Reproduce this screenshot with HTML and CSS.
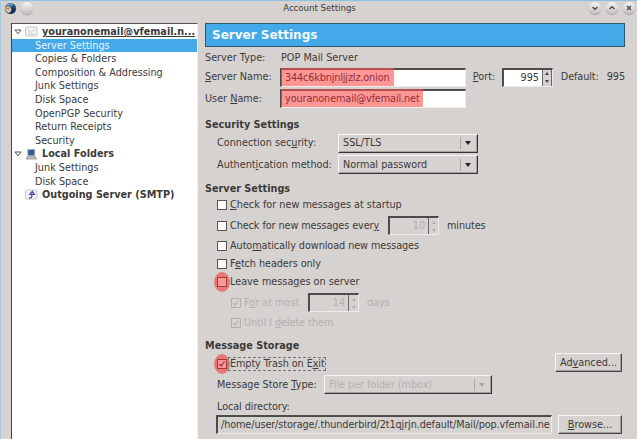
FILE: index.html
```html
<!DOCTYPE html>
<html lang="en">
<head>
<meta charset="utf-8">
<title>Account Settings</title>
<link rel="stylesheet" href="styles.css">
</head>
<body>
<div class="window">
  <header class="titlebar">
    <div class="tb-left">
      <svg width="13" height="13" viewBox="0 0 13 13"><circle cx="6.5" cy="6.5" r="5.6" fill="#24477a"/><path d="M2 3Q6 -.5 10 3L8 4Q5 2 2.500 5Z" fill="#6c9bd0"/><path d="M1 5L6 4L8 8L5 11Q1 10 1 5Z" fill="#d9c9a5"/><path d="M1.500 5.500L4.500 7.500L6 4.500" fill="none" stroke="#8b7650"/><path d="M7 6Q11 6 11.500 9Q9 12.500 5 11.500Q9 10 7 6Z" fill="#172a50"/></svg>
      <span class="orb"></span>
    </div>
    <span class="tb-title">Account Settings</span>
    <div class="tb-right">
      <span class="orb"><svg viewBox="0 0 12 12"><path d="M3.500 5L6 7.300L8.500 5"/></svg></span>
      <span class="orb"><svg viewBox="0 0 12 12"><path d="M3.500 7L6 4.700L8.500 7"/></svg></span>
      <span class="orb"><svg viewBox="0 0 12 12"><path d="M4 4L8 8M8 4L4 8"/></svg></span>
    </div>
  </header>
  <div class="content">
    <nav class="tree">
      <div class="node"><svg class="twisty" viewBox="0 0 8 6"><path d="M1 1H7L4 4.800Z"/></svg><svg class="icon" viewBox="0 0 13 10"><rect x=".5" y=".5" width="11.500" height="9" rx="1" fill="#f2f2f2" stroke="#c6c6c6"/><path d="M3 3L6.300 6L9.500 3M2.500 7.500H10" fill="none" stroke="#ccc"/></svg><b class="account">youranonemail@vfemail.n...</b></div>
      <div class="leaf selected">Server Settings</div>
      <div class="leaf">Copies &amp; Folders</div>
      <div class="leaf">Composition &amp; Addressing</div>
      <div class="leaf">Junk Settings</div>
      <div class="leaf">Disk Space</div>
      <div class="leaf">OpenPGP Security</div>
      <div class="leaf">Return Receipts</div>
      <div class="leaf">Security</div>
      <div class="node"><svg class="twisty" viewBox="0 0 8 6"><path d="M1 1H7L4 4.800Z"/></svg><svg class="icon" viewBox="0 0 13 12"><rect x="2.500" y=".5" width="7.500" height="6.500" fill="#38589c" stroke="#a9a9a9"/><path d="M2 8H10.500L12 11H.8Z" fill="#bbb" stroke="#888" stroke-width=".7"/></svg><b>Local Folders</b></div>
      <div class="leaf">Junk Settings</div>
      <div class="leaf">Disk Space</div>
      <div class="node"><span class="twisty"></span><svg class="icon" viewBox="0 0 13 10"><rect x=".5" y=".5" width="11.500" height="9" rx="1" fill="#f2f2f5" stroke="#ccc"/><path d="M4 8.500H5.500Q7 8 7 4.500M4.800 4.800L7.300 1.800L9.300 4.800Z" fill="none" stroke="#5b46b8" stroke-width="1.300"/></svg><b>Outgoing Server (SMTP)</b></div>
    </nav>
    <main class="panel">
      <h1>Server Settings</h1>
      <div class="row type"><span class="field">Server Type:</span><span class="plain">POP Mail Server</span></div>
      <div class="row name"><label class="field"><u>S</u>erver Name:</label><div class="input host"><mark class="mark">344c6kbnjnljjzlz.onion</mark></div><label class="port-label"><u>P</u>ort:</label><div class="input spin port"><span>995</span><i class="steps"><i class="up"></i><i class="down"></i></i></div><span class="default">Default:</span><span class="default-value">995</span></div>
      <div class="row user"><label class="field">User <u>N</u>ame:</label><div class="input host"><mark class="mark wide">youranonemail@vfemail.net</mark></div></div>
      <h2 class="h-security">Security Settings</h2>
      <div class="row in conn"><label class="sel-label">Connection sec<u>u</u>rity:</label><div class="select"><span>SSL/TLS</span><i class="arrow"></i></div></div>
      <div class="row in auth"><label class="sel-label">Authent<u>i</u>cation method:</label><div class="select"><span>Normal password</span><i class="arrow"></i></div></div>
      <h2 class="h-server">Server Settings</h2>
      <div class="row in startup"><i class="box"></i><span><u>C</u>heck for new messages at startup</span></div>
      <div class="row in every"><i class="box"></i><span class="every-text">Check for new messages ever<u>y</u></span><div class="input spin off"><span>10</span><i class="steps"><i class="up"></i><i class="down"></i></i></div><span class="unit">minutes</span></div>
      <div class="row in third"><i class="box"></i><span>Auto<u>m</u>atically download new messages</span></div>
      <div class="row in third"><i class="box"></i><span>F<u>e</u>tch headers only</span></div>
      <div class="row in leave"><i class="box ringed"></i><span class="leave-text">Leave messa<u>g</u>es on server</span></div>
      <div class="row sub every"><i class="box"><svg viewBox="0 0 8 8"><path d="M1.500 4L3.200 6L6.500 1.500"/></svg></i><span class="most-text">F<u>o</u>r at most</span><div class="input spin off"><span>14</span><i class="steps"><i class="up"></i><i class="down"></i></i></div><span class="unit">days</span></div>
      <div class="row sub third"><i class="box"><svg viewBox="0 0 8 8"><path d="M1.500 4L3.200 6L6.500 1.500"/></svg></i><span>Until I <u>d</u>elete them</span></div>
      <h2 class="h-storage">Message Storage</h2>
      <div class="row in trash"><i class="box ringed"><svg viewBox="0 0 8 8"><path d="M1.500 4L3.200 6L6.500 1.500"/></svg></i><span class="focus">Empty Trash on E<u>x</u>it</span><div class="button">Ad<u>v</u>anced...</div></div>
      <div class="row in store"><label class="store-label">Message Store <u>T</u>ype:</label><div class="select off"><span>File per folder (mbox)</span><i class="arrow"></i></div></div>
      <div class="row in dir">Local directory:</div>
      <div class="row in path"><div class="input dirbox"><span>/home/user/storage/.thunderbird/2t1qjrjn.default/Mail/pop.vfemail.ne</span></div><div class="button browse"><u>B</u>rowse...</div></div>
    </main>
  </div>
</div>
</body>
</html>
```
FILE: styles.css
```css
* { box-sizing: border-box; }
body { margin: 0; background: #d6d2d0; color: #3c3a39; font: 9.7px/14px "DejaVu Sans", sans-serif; }
i { font-style: normal; }
u { text-underline-offset: 1px; text-decoration-thickness: 1px; }
.window { width: 637px; height: 439px; overflow: hidden; border-top: 1px solid #8dbfe0; border-left: 1px solid #a3cbe4; display: flex; flex-direction: column; white-space: nowrap; }
.titlebar { height: 22px; flex: none; display: grid; grid-template-columns: 1fr auto 1fr; align-items: start; padding: 0 2px 0 3px; }
.tb-left, .tb-right { display: flex; align-items: center; height: 14px; }
.tb-left { gap: 4px; }
.tb-right { gap: 5px; justify-content: flex-end; }
.tb-title { font-size: 8.6px; line-height: 14px; }
.orb { width: 12px; height: 12px; border-radius: 50%; background: linear-gradient(#f4f4f4, #c2bfbd); box-shadow: 0 1px 1px #a09e9c; display: block; }
.orb svg { display: block; fill: none; stroke: #4b4b4b; stroke-width: 1.3; }
.content { flex: 1; display: flex; min-height: 0; padding-left: 10px; }
.tree { width: 187px; flex: none; background: #fff; border: 1px solid #555; border-left-color: #444; border-right: 1px solid #f0eeed; border-bottom: 0; padding-top: 1px; }
.node, .leaf { height: 13.6px; line-height: 13.6px; }
.node { display: flex; align-items: center; padding-left: 2px; }
.leaf { padding-left: 23px; }
.selected { background: #43a9e8; color: #e9f6ff; }
.twisty { width: 8px; height: 6px; margin-right: 3px; fill: none; stroke: #555; }
.icon { width: 13px; height: 11px; margin-right: 4px; }
.account { text-decoration: underline; text-underline-offset: 1px; }
.panel { width: 420px; margin-left: 7px; flex: none; }
h1 { margin: 0; height: 24px; font-size: 12px; line-height: 22px; padding-left: 6px; color: #f4fbff; background: #43a9e8; border: 1px solid #30566f; width: 420px; }
h2 { margin: 0; height: 16px; font-size: 9.7px; line-height: 16px; }
.row { display: flex; align-items: center; }
.in { padding-left: 12px; }
.sub { padding-left: 26px; color: #b5b0ad; }
.type { height: 16px; margin-top: 3px; }
.name { height: 20px; margin-top: 1px; }
.user { height: 19px; margin-top: 2px; }
.field { width: 75px; }
.plain { margin-left: 1px; }
.input { height: 19px; background: #fff; border: 1px solid; border-width: 2px 1px 1px 2px; border-color: #4e4c4b #efedec #efedec #4e4c4b; display: flex; align-items: center; letter-spacing: -.1px; }
.host { width: 186px; }
.mark { background: rgba(255, 80, 80, .6); color: #8e3038; align-self: stretch; line-height: 16px; width: 113px; margin: -2px 0 0 -1px; padding: 2px 0 0 4px; letter-spacing: -.14px; }
.mark.wide { width: 142px; letter-spacing: -.1px; }
.port-label { margin-left: 7px; width: 29px; }
.spin { width: 51px; justify-content: flex-end; }
.steps { width: 10px; height: 100%; margin-left: 3px; background: #d6d2d0; border-left: 1px solid #666; display: flex; flex-direction: column; justify-content: space-around; align-items: center; }
.port .steps { border-right: 1px solid #666; }
.up, .down { border: 2px solid transparent; }
.up { border-top: 0; border-bottom: 3px solid #444; }
.down { border-bottom: 0; border-top: 3px solid #444; }
.default { margin-left: 8px; width: 46px; letter-spacing: -.1px; }
.default-value { letter-spacing: -.1px; }
.h-security { margin-top: 9px; }
.conn { height: 20px; }
.auth { height: 19px; margin-top: 2px; }
.sel-label { width: 121px; }
.select { width: 140px; height: 19px; border: 1px solid; border-color: #f7f5f4 #333 #333 #f7f5f4; box-shadow: inset -1px -1px #a5a19f; display: flex; align-items: center; justify-content: space-between; padding: 0 6px 0 4px; }
.arrow { width: 11px; height: 12px; border-left: 1px solid #aaa6a4; display: flex; align-items: center; justify-content: flex-end; }
.arrow::after { content: ""; border: 3.5px solid transparent; border-top: 4px solid #222; border-bottom: 0; }
.h-server { margin-top: 7px; }
.startup { height: 16px; }
.every { height: 19px; margin-top: 3px; }
.every-text { width: 158px; letter-spacing: -.08px; }
.third { height: 15px; margin-top: 3px; letter-spacing: -.07px; }
.leave { height: 16px; margin-top: 3px; }
.box { width: 10px; height: 10px; border: 1px solid #555; background: #fff; margin-right: 3px; flex: none; }
.box svg { display: block; fill: none; stroke: currentColor; stroke-width: 1.2; }
.sub .box { background: none; border-color: #b5b0ad; }
.ringed { background: #ff9999; border-color: #9d3a3a; position: relative; color: #8e3038; }
.ringed::before { content: ""; position: absolute; left: -4px; top: -6px; width: 16px; height: 20px; border-radius: 50%; background: #e87777; z-index: -1; }
.off.input { background: none; color: #b5b0ad; }
.off .up { border-bottom-color: #b5b0ad; }
.off .down { border-top-color: #b5b0ad; }
.unit { margin-left: 8px; letter-spacing: -.1px; }
.most-text { width: 64px; }
.h-storage { height: 15px; margin-top: 8px; }
.trash { height: 19px; }
.trash .box { margin-top: 3px; margin-right: 1px; }
.focus { border: 1px dashed #777; height: 14px; line-height: 12px; padding: 0 1px; margin-top: 3px; width: 98px; letter-spacing: -.1px; }
.button { width: 67px; height: 19px; border: 1px solid; border-color: #f7f5f4 #444 #444 #f7f5f4; box-shadow: inset -1px -1px #a5a19f; text-align: center; line-height: 17px; margin-left: 229px; flex: none; }
.store { height: 19px; margin-top: 3px; }
.store-label { width: 107px; }
.off.select { width: 168px; color: #b5b0ad; letter-spacing: -.05px; }
.off .arrow::after { border-top-color: #aaa6a4; }
.dir { height: 15px; margin-top: 5px; letter-spacing: -.08px; }
.path { height: 19px; margin-top: 1px; padding-left: 11px; }
.dirbox { width: 336px; background: none; padding: 0 3px; flex: none; }
.browse { width: 64px; margin-left: 6px; }
```
